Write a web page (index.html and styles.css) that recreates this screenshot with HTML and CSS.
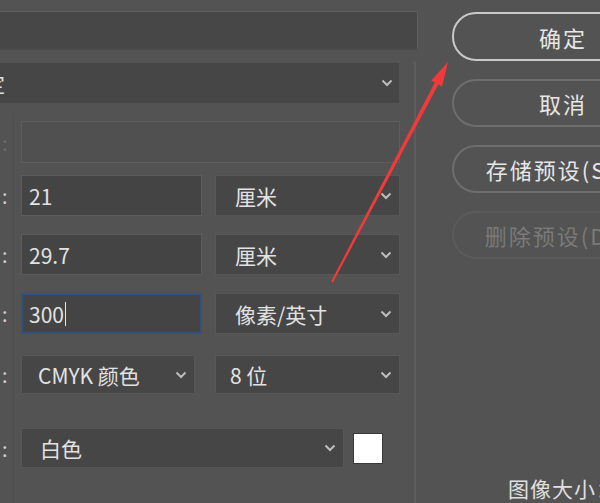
FILE: index.html
```html
<!DOCTYPE html>
<html lang="zh-CN">
<head>
<meta charset="utf-8">
<title>新建文档</title>
<link rel="stylesheet" href="styles.css">
</head>
<body>
<div class="page">
  <div class="left">
    <div class="topfield"></div>
    <div class="group">
      <div class="preset">
        <span class="preset-text">自定</span>
        <svg class="chev" viewBox="0 0 12 8"><path d="M1.5 1.5l4.5 4.5 4.5-4.5"/></svg>
      </div>
      <div class="row row-dis">
        <span class="lab dim">:</span>
        <div class="field disabled"></div>
      </div>
      <div class="row row-a">
        <span class="lab">:</span>
        <div class="field input">21</div>
        <div class="field select unit">厘米<svg class="chev" viewBox="0 0 12 8"><path d="M1.5 1.5l4.5 4.5 4.5-4.5"/></svg></div>
      </div>
      <div class="row row-b">
        <span class="lab">:</span>
        <div class="field input">29.7</div>
        <div class="field select unit">厘米<svg class="chev" viewBox="0 0 12 8"><path d="M1.5 1.5l4.5 4.5 4.5-4.5"/></svg></div>
      </div>
      <div class="row row-c">
        <span class="lab">:</span>
        <div class="field input focus">300<span class="caret"></span></div>
        <div class="field select unit">像素/英寸<svg class="chev" viewBox="0 0 12 8"><path d="M1.5 1.5l4.5 4.5 4.5-4.5"/></svg></div>
      </div>
      <div class="row row-d">
        <span class="lab">:</span>
        <div class="field select mode">CMYK 颜色<svg class="chev" viewBox="0 0 12 8"><path d="M1.5 1.5l4.5 4.5 4.5-4.5"/></svg></div>
        <div class="field select bits">8 位<svg class="chev" viewBox="0 0 12 8"><path d="M1.5 1.5l4.5 4.5 4.5-4.5"/></svg></div>
      </div>
      <div class="row row-e">
        <span class="lab">:</span>
        <div class="field select bg">白色<svg class="chev" viewBox="0 0 12 8"><path d="M1.5 1.5l4.5 4.5 4.5-4.5"/></svg></div>
        <div class="swatch"></div>
      </div>
    </div>
  </div>
  <div class="right">
    <div class="btn primary">确定</div>
    <div class="btn">取消</div>
    <div class="btn">存储预设(S)...</div>
    <div class="btn disabled-btn">删除预设(D)...</div>
    <div class="imgsize">图像大小：</div>
  </div>
  <svg class="arrow" viewBox="0 0 600 503">
    <polygon points="332.9,282.5 331.1,281.5 435,82.3 438.6,84.1" />
    <polygon points="448,62 442.1,86.5 431.2,80.6" />
  </svg>
</div>
</body>
</html>
```

FILE: styles.css
```css
html, body {
  margin: 0;
  padding: 0;
  background: #535353;
}
body {
  font-family: "Noto Sans CJK SC", "Noto Sans", sans-serif;
  color: #e2e2e2;
}
.page {
  position: relative;
  width: 600px;
  height: 503px;
  overflow: hidden;
  display: flex;
}
.left {
  width: 418px;
  flex: none;
  display: flex;
  flex-direction: column;
}
.topfield {
  margin-top: 11px;
  height: 36px;
  background: #474747;
  border: 1px solid #5e5e5e;
  border-left: none;
  border-bottom: 2px solid #4a4a4a;
}
.group {
  margin-top: 12px;
  width: 400px;
  border-right: 2px solid #5d5d5d;
  padding-right: 14px;
  flex: 1;
  position: relative;
}
.group::before {
  content: "";
  position: absolute;
  left: 13px;
  top: 52px;
  bottom: 0;
  width: 1px;
  background: #4e4e4e;
}
.preset {
  margin-top: 1px;
  height: 40px;
  width: 399px;
  background: #464646;
  display: flex;
  align-items: center;
  justify-content: space-between;
  font-size: 21px;
  box-sizing: border-box;
  padding-right: 6px;
}
.preset-text {
  margin-left: -37px;
}
.chev {
  width: 12px;
  height: 8px;
  flex: none;
}
.chev path {
  fill: none;
  stroke: #bdbdbd;
  stroke-width: 2;
}
.row {
  display: flex;
  align-items: center;
  position: relative;
}
.lab {
  width: 21px;
  flex: none;
  font-size: 20px;
  padding-left: 2px;
  box-sizing: border-box;
  color: #cfcfcf;
}
.lab.dim {
  color: #6c6c6c;
}
.field {
  box-sizing: border-box;
  height: 41px;
  font-size: 21px;
  display: flex;
  align-items: center;
}
.row-dis { margin-top: 18px; }
.row-dis .field { height: 42px; }
.disabled {
  width: 379px;
  background: #505050;
  border: 1px solid #5d5d5d;
}
.row-a { margin-top: 12px; }
.row-b { margin-top: 18px; }
.row-c { margin-top: 18px; }
.row-d { margin-top: 21px; }
.row-e { margin-top: 34px; }
.input {
  width: 182px;
  background: #444444;
  border: 1px solid #5c5c5c;
  padding-left: 7px;
}
.input.focus {
  border: 2px solid #33507e;
  padding-left: 6px;
}
.caret {
  display: inline-block;
  width: 1px;
  height: 24px;
  background: #e6e6e6;
  margin-left: 1px;
}
.select {
  background: #464646;
  border: 1px solid #575757;
  justify-content: space-between;
  padding-right: 7px;
}
.unit {
  margin-left: 13px;
  width: 186px;
  padding-left: 19px;
}
.row-d .field { height: 39px; }
.mode {
  width: 174px;
  padding-left: 16px;
  border-radius: 2px;
}
.bits {
  margin-left: 20px;
  width: 185px;
  padding-left: 14px;
}
.bg {
  width: 323px;
  padding-left: 18px;
}
.row-e .field { height: 40px; }
.swatch {
  margin-left: 9px;
  width: 28px;
  height: 29px;
  background: #ffffff;
  border: 1px solid #3a3a3a;
}
.right {
  margin-left: 34px;
  width: 222px;
  flex: none;
  display: flex;
  flex-direction: column;
}
.btn {
  box-sizing: border-box;
  height: 48px;
  border: 2px solid #6e6e6e;
  border-radius: 24px;
  display: flex;
  align-items: center;
  justify-content: center;
  font-size: 22px;
  letter-spacing: 2px;
  color: #e6e6e6;
  margin-top: 18px;
  white-space: nowrap;
}
.btn.primary {
  margin-top: 12px;
  height: 49px;
  border-color: #c9c9c9;
}
.disabled-btn {
  border-color: #5b5b5b;
  color: #7a7a7a;
}
.imgsize {
  margin-top: 214px;
  padding-left: 56px;
  font-size: 21px;
  letter-spacing: 1px;
  white-space: nowrap;
  color: #e0e0e0;
}
.arrow {
  position: absolute;
  left: 0;
  top: 0;
  width: 600px;
  height: 503px;
  pointer-events: none;
}
.arrow polygon {
  fill: #f23a3a;
}
```
